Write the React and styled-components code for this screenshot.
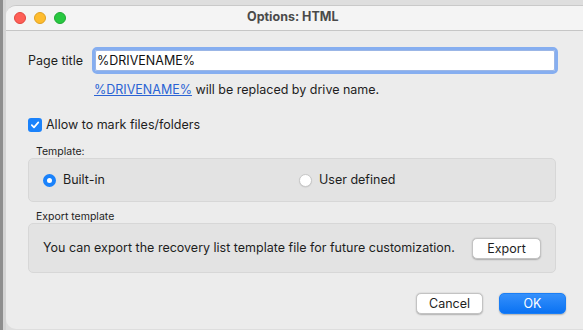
import React from 'react'
import styled, { createGlobalStyle } from 'styled-components'

const GlobalStyle = createGlobalStyle`
  html, body {
    margin: 0;
    padding: 0;
    width: 583px;
    height: 330px;
    overflow: hidden;
    background: #dcdcdc;
    font-family: Inter, "Liberation Sans", Arial, sans-serif;
  }
`

export default function App() {
  return (
    <>
      <GlobalStyle />
      <Desktop>
        <BackWindow />
        <Window>
          <TitleBar>
            <Lights>
              <Light color="#fe5f57" edge="#e1463f" />
              <Light color="#febc2e" edge="#dea123" />
              <Light color="#28c840" edge="#1fa834" />
            </Lights>
            <Title>Options: HTML</Title>
          </TitleBar>

          <Content>
            <FieldRow>
              <Label>Page title</Label>
              <TextInput defaultValue="%DRIVENAME%" />
            </FieldRow>
            <Hint>
              <LinkText>%DRIVENAME%</LinkText> will be replaced by drive name.
            </Hint>

            <CheckRow>
              <CheckBox>
                <svg width="10" height="10" viewBox="0 0 10 10">
                  <path d="M1.8 5.2 L4 7.4 L8.3 2.4" fill="none" stroke="#fff" strokeWidth="1.7" strokeLinecap="round" strokeLinejoin="round" />
                </svg>
              </CheckBox>
              <span>Allow to mark files/folders</span>
            </CheckRow>

            <GroupTitle>Template:</GroupTitle>
            <RadioBox>
              <RadioCell>
                <Radio checked />
                <span>Built-in</span>
              </RadioCell>
              <RadioCell>
                <Radio />
                <span>User defined</span>
              </RadioCell>
            </RadioBox>

            <GroupTitle top={8}>Export template</GroupTitle>
            <GroupBox height={50}>
              <ExportText>You can export the recovery list template file for future customization.</ExportText>
              <Button>Export</Button>
            </GroupBox>

            <Footer>
              <Button width={67}>Cancel</Button>
              <Button width={67} primary>OK</Button>
            </Footer>
          </Content>
        </Window>
      </Desktop>
    </>
  )
}

//-----------------------------------------------style-----------------------------------------------//

const Desktop = styled.div`
  display: flex;
  align-items: flex-start;
  height: 330px;
  padding-top: 5px;
  box-sizing: border-box;
  background: #dedede;
`

const BackWindow = styled.div`
  width: 3px;
  margin-top: -5px;
  height: 330px;
  background: #8e8e8e;
  border-right: 3px solid #d4d4d4;
  flex-shrink: 0;
`

const Window = styled.div`
  width: 600px;
  height: 323px;
  flex-shrink: 0;
  background: #ececec;
  border-top: 1px solid #c9c9c9;
  border-radius: 10px 0 0 10px;
  overflow: hidden;
  display: flex;
  flex-direction: column;
`

const TitleBar = styled.div`
  height: 24px;
  background: #f4f4f4;
  border-bottom: 1px solid #c6c6c6;
  display: flex;
  align-items: center;
  position: relative;
  flex-shrink: 0;
`

const Lights = styled.div`
  display: flex;
  gap: 8px;
  padding-left: 8px;
  margin-top: -1px;
`

const Light = styled.div`
  width: 12px;
  height: 12px;
  box-sizing: border-box;
  border-radius: 50%;
  background: ${p => p.color};
  border: 0.5px solid ${p => p.edge};
`

const Title = styled.div`
  position: absolute;
  left: 241px;
  top: 3px;
  font-size: 12.5px;
  line-height: 16px;
  font-weight: 700;
  color: #4a4a4a;
`

const Content = styled.div`
  display: flex;
  flex-direction: column;
  padding: 19px 0 0 22px;
  width: 529px;
  font-size: 12.5px;
  line-height: 16px;
  color: #1e1e1e;
`

const FieldRow = styled.div`
  display: flex;
  align-items: center;
`

const Label = styled.span`
  width: 67px;
  white-space: nowrap;
  padding-top: 1px;
`

const TextInput = styled.input`
  width: 460px;
  height: 21px;
  box-sizing: border-box;
  border: 1px solid #9bb6e6;
  outline: 3px solid #86aef0;
  outline-offset: 0;
  border-radius: 2px;
  padding: 0 1px;
  font-family: Inter, "Liberation Sans", Arial, sans-serif;
  font-size: 12.5px;
  color: #111;
  background: #fff;
`

const Hint = styled.div`
  margin: 11px 0 0 66px;
`

const LinkText = styled.span`
  color: #2a63d4;
  text-decoration: underline;
`

const CheckRow = styled.label`
  display: flex;
  align-items: center;
  gap: 4px;
  margin-top: 19px;
`

const CheckBox = styled.span`
  width: 14px;
  height: 14px;
  border-radius: 3px;
  background: #1a82fb;
  display: flex;
  align-items: center;
  justify-content: center;
`

const GroupTitle = styled.div`
  font-size: 10.5px;
  line-height: 13px;
  margin: ${p => p.top || 12}px 0 0 8px;
  color: #1e1e1e;
`

const GroupBox = styled.div`
  width: 528px;
  height: ${p => p.height}px;
  box-sizing: border-box;
  background: #e3e3e3;
  border: 1px solid #d7d7d7;
  border-radius: 5px;
  display: flex;
  align-items: center;
  padding: 0 14px;
`

const RadioBox = styled(GroupBox)`
  height: 44px;
  display: grid;
  grid-template-columns: 256px 1fr;
`

const RadioCell = styled.div`
  display: flex;
  align-items: center;
  gap: 7px;
`

const Radio = styled.span`
  width: 13px;
  height: 13px;
  box-sizing: border-box;
  border-radius: 50%;
  background: #fff;
  border: ${p => (p.checked ? '4px solid #1a82fb' : '1px solid #c8c8c8')};
  box-shadow: ${p => (p.checked ? 'none' : '0 0.5px 1px rgba(0,0,0,0.12)')};
`

const ExportText = styled.span`
  flex: 1;
`

const Button = styled.button`
  width: ${p => p.width || 69}px;
  height: 21px;
  border-radius: 5px;
  border: ${p => (p.primary ? '1px solid #1a7ef5' : '0.5px solid #c3c3c3')};
  background: ${p => (p.primary ? 'linear-gradient(#3590fb, #0a72f3)' : '#fff')};
  color: ${p => (p.primary ? '#fff' : '#1e1e1e')};
  box-shadow: 0 0.5px 1.5px rgba(0, 0, 0, 0.25);
  font-family: Inter, "Liberation Sans", Arial, sans-serif;
  font-size: 12.5px;
  padding: 0;
`

const Footer = styled.div`
  display: flex;
  justify-content: flex-end;
  gap: 16px;
  margin-top: 20px;
  width: 538px;
`
